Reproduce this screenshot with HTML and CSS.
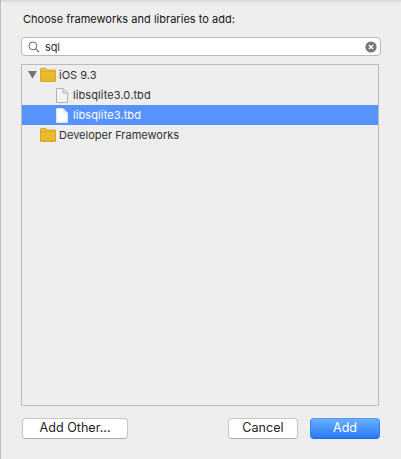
FILE: index.html
```html
<!DOCTYPE html>
<html lang="en">
<head>
<meta charset="utf-8">
<title>Choose frameworks and libraries</title>
<link rel="stylesheet" href="styles.css">
</head>
<body>
<svg width="0" height="0" class="defs">
  <defs>
    <linearGradient id="gold" x1="0" y1="0" x2="0" y2="1"><stop offset="0" stop-color="#f0c136"/><stop offset="1" stop-color="#e5b52e"/></linearGradient>
    <symbol id="folder" viewBox="0 0 16 14"><path d="M.5 1Q.5.5 1 .5H5.500Q6.300.5 6.700 1.500L7 2H15Q15.500 2 15.500 2.500V13Q15.500 13.500 15 13.500H1Q.5 13.500.5 13Z" fill="url(#gold)" stroke="#d8a62c"/><path d="M1 3.500H15" stroke="#dcab2d"/></symbol>
    <symbol id="file" viewBox="0 0 12 15"><path d="M.5.5H7L11.500 5V14.500H.5Z" fill="currentColor" stroke="var(--edge)" stroke-width=".9"/><path d="M7 .5V5H11.500" fill="none" stroke="var(--edge)" stroke-width=".9"/></symbol>
  </defs>
</svg>
<main class="sheet">
  <h1 class="title">Choose frameworks and libraries to add:</h1>
  <div class="search">
    <svg class="lens" width="12" height="12" viewBox="0 0 12 12" fill="none" stroke="#6c6c6c"><circle cx="4.900" cy="4.900" r="3.900"/><path d="M7.800 7.800L11 11" stroke-width="1.200"/></svg>
    <span class="query">sql</span>
    <svg class="clear" width="12" height="12" viewBox="0 0 12 12"><circle cx="6" cy="6" r="5.600" fill="#777"/><path d="M3.900 3.900L8.100 8.100M8.100 3.900L3.900 8.100" stroke="#fff" stroke-width="1.400"/></svg>
  </div>
  <div class="list">
    <div class="row">
      <svg class="arrow" width="9" height="8" viewBox="0 0 9 8"><path d="M0 0H9L4.500 7.800Z" fill="#757575"/></svg>
      <svg class="folder" width="16" height="14"><use href="#folder"/></svg>
      <span class="ios">iOS 9.3</span>
    </div>
    <div class="row child"><svg class="file" width="12" height="15"><use href="#file"/></svg><span class="lib">libsqlite3.0.tbd</span></div>
    <div class="row child selected"><svg class="file" width="12" height="15"><use href="#file"/></svg><span class="lib">libsqlite3.tbd</span></div>
    <div class="row"><span class="arrow"></span><svg class="folder" width="16" height="14"><use href="#folder"/></svg><span class="dev">Developer Frameworks</span></div>
  </div>
  <div class="actions">
    <button class="btn other">Add Other...</button>
    <button class="btn cancel">Cancel</button>
    <button class="btn add">Add</button>
  </div>
</main>
</body>
</html>
```
FILE: styles.css
```css
* { box-sizing: border-box; }
body { margin: 0; font-family: Inter, "Liberation Sans", sans-serif; font-size: 11px; color: #303030; }
.defs { position: absolute; }
.sheet {
  width: 401px; height: 459px; overflow: hidden;
  display: flex; flex-direction: column;
  padding: 10px 22px 0 20px;
  border-left: 1px solid #bcbcbc;
  background: linear-gradient(#d9d9d9, #eee 4px);
  white-space: nowrap;
}
.title { margin: 0 0 8px 2px; height: 19px; line-height: 19px; font-size: 11px; font-weight: 400; color: #151515; letter-spacing: .02px; }
.search {
  width: 360px; height: 19px; flex: none;
  display: flex; align-items: center;
  padding: 0 3px 0 6px;
  background: #fff; border: 1px solid #b9b9b9; border-radius: 4px;
}
.query { margin-left: 5px; padding-top: 1px; flex: 1; line-height: 17px; letter-spacing: -.1px; }
.list { width: 358px; height: 342px; margin-top: 8px; flex: none; border: 1px solid #bbb; }
.row { height: 20px; display: flex; align-items: center; padding-left: 6px; line-height: 20px; }
.arrow { width: 9px; margin-right: 3px; flex: none; }
.folder { margin-right: 3px; flex: none; }
.child { padding-left: 34px; --edge: #aaa; }
.lib { letter-spacing: .1px; }
.file { margin-right: 5px; flex: none; color: #f3f3f3; }
.selected { background: #5893fb; color: #fff; }
.selected .file { color: #fff; --edge: #dce8ff; }
.actions { display: flex; align-items: center; margin-top: 12px; padding-left: 1px; }
.btn {
  height: 21px; padding: 0 0 1px; flex: none;
  font: 12.6px/18px Inter, "Liberation Sans", sans-serif; color: #262626;
  background: #fff; border: 1px solid #c6c6c6; border-bottom-color: #acacac; border-radius: 4px;
}
.other { width: 106px; }
.cancel { width: 70px; margin-left: 100px; }
.add { width: 70px; margin-left: 12px; color: #fff; background: linear-gradient(#6bb0fa, #2579f8); border-color: #4d98f5 #3483f0 #2168dc; }
```
